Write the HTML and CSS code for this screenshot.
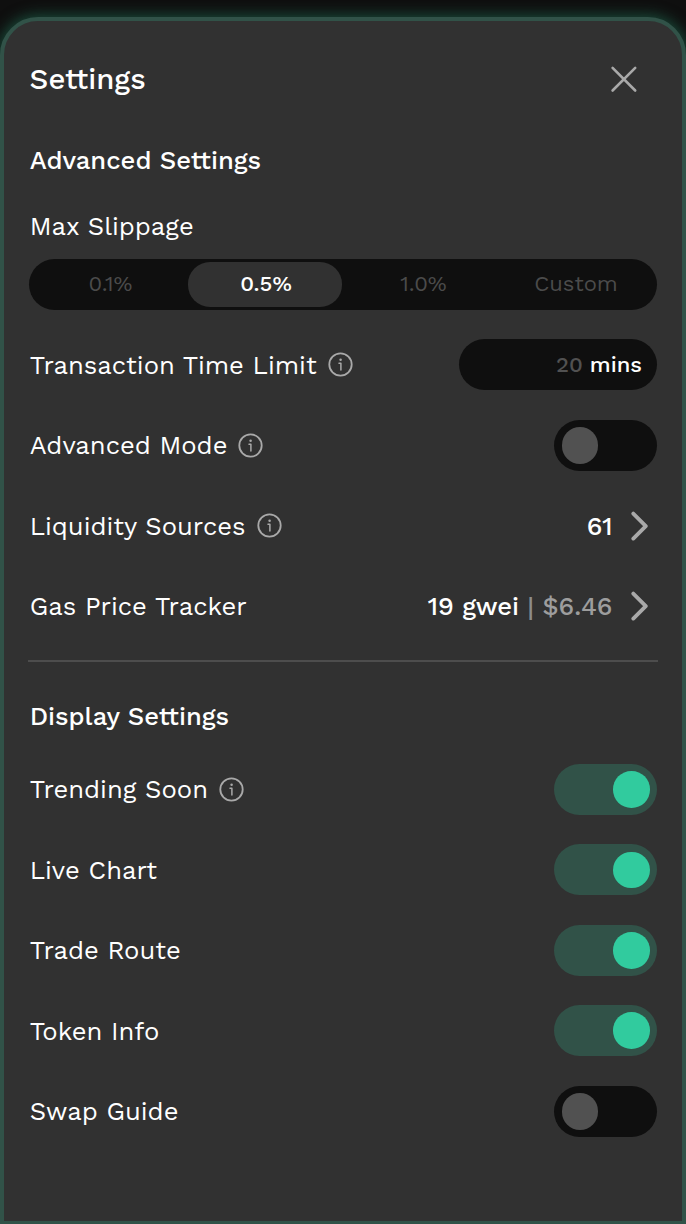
FILE: index.html
```html
<!DOCTYPE html>
<html lang="en">
<head>
<meta charset="utf-8">
<title>Settings</title>
<link rel="stylesheet" href="styles.css">
</head>
<body>
<svg class="defs" width="0" height="0" aria-hidden="true">
  <symbol id="info" viewBox="0 0 25 25"><circle cx="12.5" cy="12.5" r="11.2" fill="none" stroke="currentColor" stroke-width="1.8"/><circle cx="12.6" cy="7.8" r="1.25" fill="currentColor"/><path d="M11 11.2H12.9V18" fill="none" stroke="currentColor" stroke-width="1.5" stroke-linecap="round" stroke-linejoin="round"/></symbol>
  <symbol id="chevron" viewBox="0 0 18 30"><path d="M2.3 2.6L14.8 15.1L2.3 27.6" fill="none" stroke="currentColor" stroke-width="3.8" stroke-linecap="round" stroke-linejoin="round"/></symbol>
</svg>
<main class="panel">
  <header class="header">
    <h1 class="title">Settings</h1>
    <button class="close" aria-label="Close"><svg width="28" height="28" viewBox="0 0 28 28"><path d="M2.6 2.9L25.2 25.5M25.2 2.9L2.6 25.5" fill="none" stroke="currentColor" stroke-width="2.6" stroke-linecap="round"/></svg></button>
  </header>
  <section class="advanced">
    <h2 class="heading">Advanced Settings</h2>
    <div class="label slippage-label">Max Slippage</div>
    <div class="segments">
      <button class="segment">0.1%</button>
      <button class="segment active">0.5%</button>
      <button class="segment">1.0%</button>
      <button class="segment custom">Custom</button>
    </div>
    <div class="rows">
      <div class="row"><div class="label">Transaction Time Limit<svg class="info"><use href="#info"/></svg></div><div class="field"><span class="amount">20</span><span class="unit">mins</span></div></div>
      <div class="row"><div class="label">Advanced Mode<svg class="info"><use href="#info"/></svg></div><div class="toggle"><i class="knob"></i></div></div>
      <div class="row"><div class="label">Liquidity Sources<svg class="info"><use href="#info"/></svg></div><div class="link"><span class="count">61</span><svg class="chevron"><use href="#chevron"/></svg></div></div>
      <div class="row"><div class="label">Gas Price Tracker</div><div class="link"><span class="gwei">19 gwei</span><span class="bar">|</span><span class="price">$6.46</span><svg class="chevron"><use href="#chevron"/></svg></div></div>
    </div>
  </section>
  <section class="display">
    <h2 class="heading">Display Settings</h2>
    <div class="rows">
      <div class="row"><div class="label">Trending Soon<svg class="info"><use href="#info"/></svg></div><div class="toggle on"><i class="knob"></i></div></div>
      <div class="row"><div class="label">Live Chart</div><div class="toggle on"><i class="knob"></i></div></div>
      <div class="row"><div class="label">Trade Route</div><div class="toggle on"><i class="knob"></i></div></div>
      <div class="row"><div class="label">Token Info</div><div class="toggle on"><i class="knob"></i></div></div>
      <div class="row"><div class="label">Swap Guide</div><div class="toggle"><i class="knob"></i></div></div>
    </div>
  </section>
</main>
</body>
</html>
```
FILE: styles.css
```css
* { box-sizing: border-box; }
body { margin: 0; height: 1224px; padding-top: 17px; overflow: hidden; background: #0f0f0f; color: #fff; font-family: "Work Sans", "Open Sans", sans-serif; font-size: 25.6px; line-height: 30px; }
.defs { display: block; }
button { margin: 0; padding: 0; border: 0; background: none; font: inherit; color: inherit; }
h1, h2 { margin: 0; }
.panel { height: 1208px; border: 4px solid #315248; border-radius: 38px 38px 0 0; padding: 0 25px; background: #313131; box-shadow: 0 0 14px 2px #1a4c3b; }
.header { display: flex; justify-content: space-between; align-items: center; height: 116px; padding-right: 19px; }
.title { padding-left: .6px; font-size: 29.3px; line-height: 31px; font-weight: 500; }
.close { color: #a9a9a9; }
.close svg { display: block; }
.heading { padding-left: .7px; font-size: 25.6px; line-height: 30px; font-weight: 500; }
.advanced { padding-top: 8px; }
.advanced .heading { height: 66px; }
.label { display: flex; align-items: center; gap: 11px; padding-left: .7px; white-space: nowrap; }
.slippage-label { height: 30px; }
.segments { display: grid; grid-template-columns: 159px 154px 159px 1fr; height: 51px; margin-top: 18px; margin-bottom: 29.3px; padding: 3px 0 3.5px; border-radius: 26px; background: #0f0f0f; font-size: 22px; }
.segment { padding: 0 0 1px 4px; color: #4b4b4b; }
.active { padding-left: 2px; border-radius: 22px; background: #313131; color: #fff; font-weight: 500; }
.custom { padding: 0 6px 1px 0; }
.rows { display: grid; gap: 29.3px; }
.row { display: flex; justify-content: space-between; align-items: center; height: 51.2px; }
.info { width: 25px; height: 25px; color: #a9a9a9; }
.field { display: flex; justify-content: flex-end; align-items: center; gap: 7px; width: 198px; height: 51.2px; padding-right: 15px; border-radius: 26px; background: #0f0f0f; font-size: 22px; font-weight: 500; }
.amount { color: #515151; }
.toggle { width: 102.7px; height: 51.2px; padding: 7.3px; border-radius: 26px; background: #0f0f0f; }
.knob { display: block; width: 36.6px; height: 36.6px; border-radius: 50%; background: #515151; }
.on { background: #315248; }
.on .knob { margin-left: auto; background: #31cb9e; }
.link { display: flex; align-items: center; padding-right: 8.5px; font-weight: 500; }
.chevron { width: 18px; height: 30px; margin-left: 18px; color: #a9a9a9; }
.bar { margin: 0 8.3px; color: #8c8c8c; }
.price { color: #9d9d9d; }
.display { margin: 28px -1px 0; padding: 39.3px 1px 0; border-top: 2px solid #4d4d4d; }
.display .heading { height: 62.5px; }
```
